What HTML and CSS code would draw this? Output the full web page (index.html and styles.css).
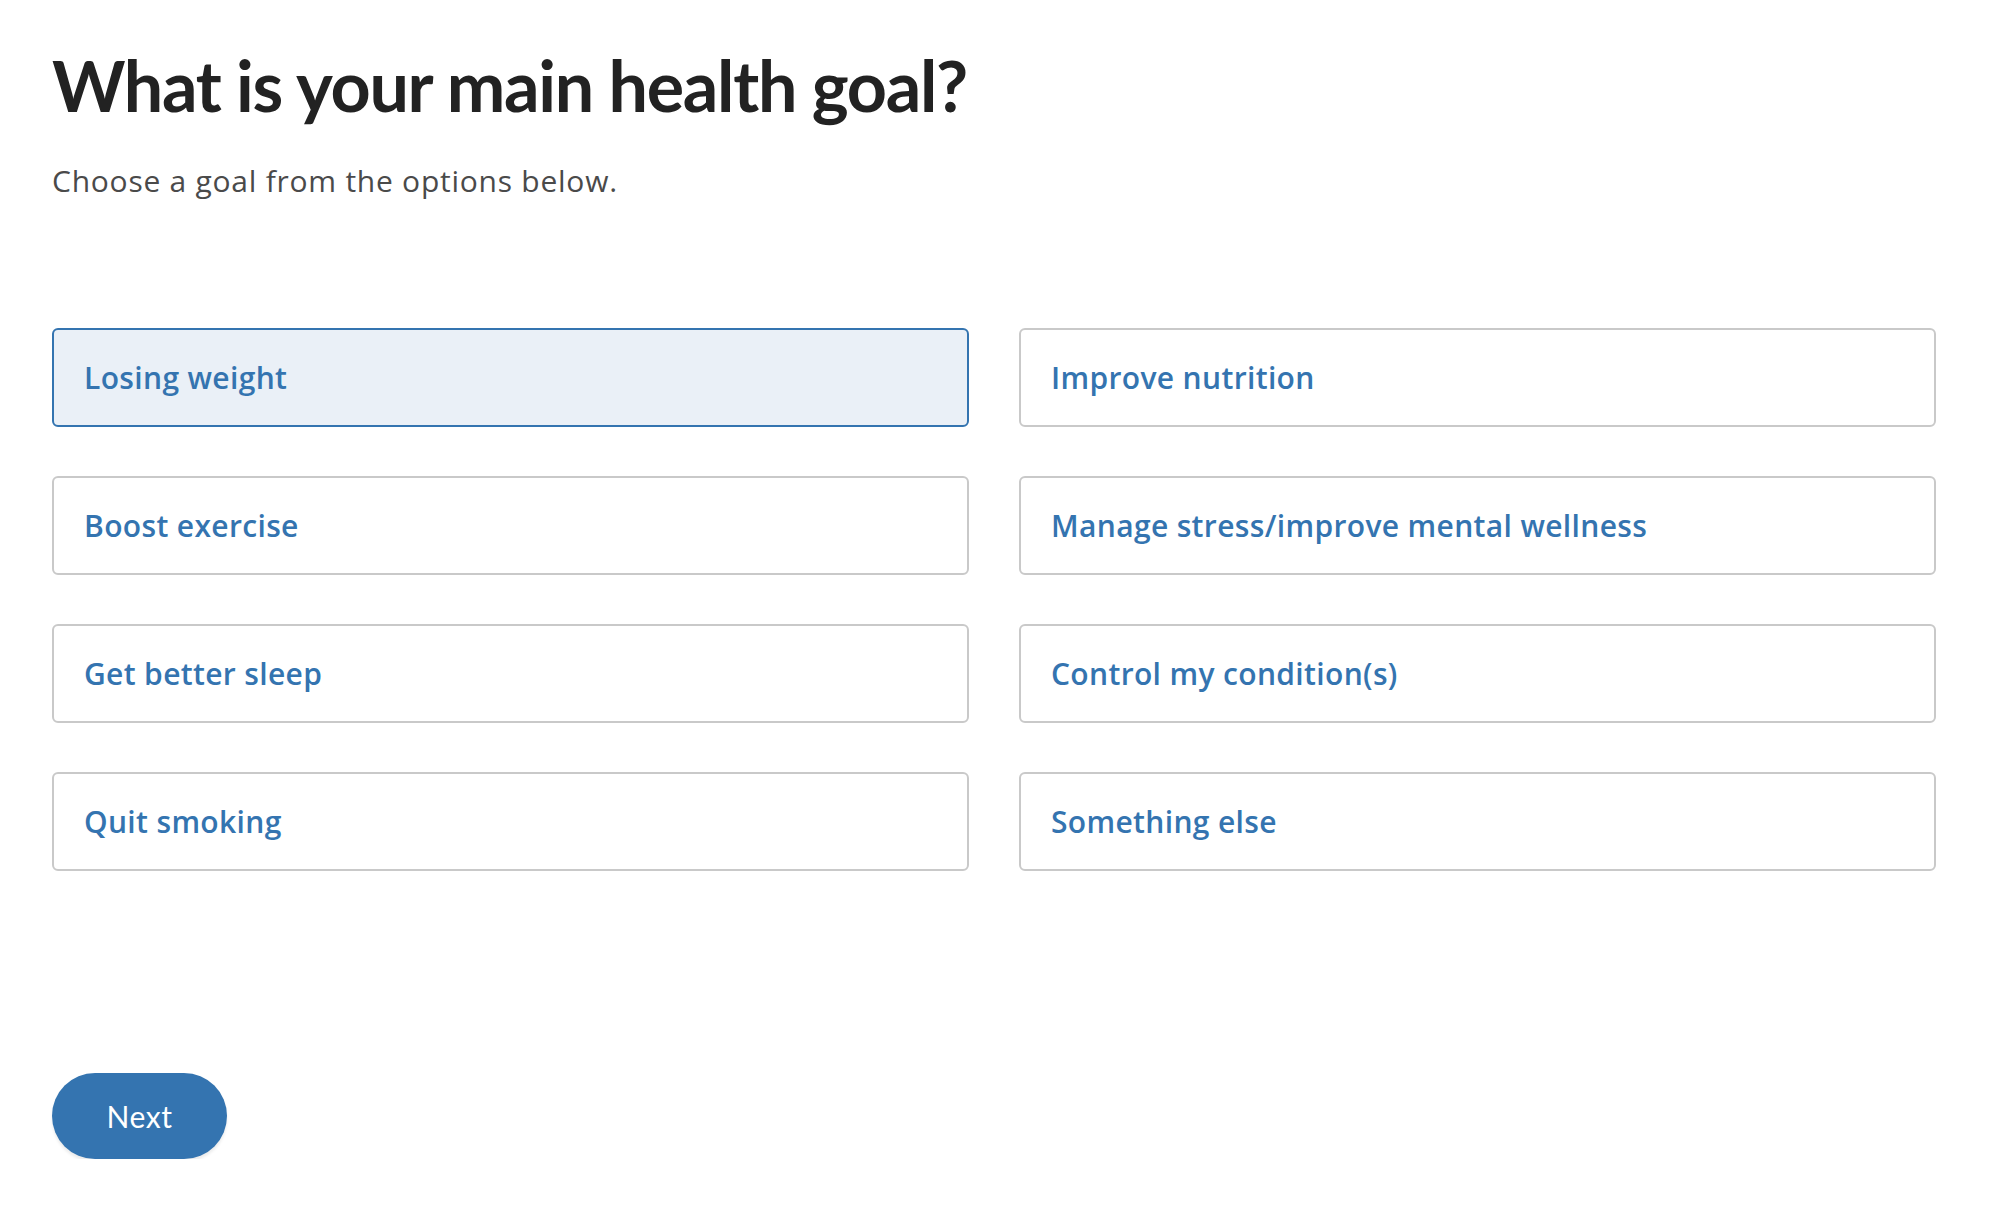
FILE: index.html
```html
<!DOCTYPE html>
<html lang="en">
<head>
    <meta charset="UTF-8">
    <meta name="viewport" content="width=device-width, initial-scale=1.0">
    <link rel="stylesheet" href="styles.css">
    <title>Health Goal</title>
</head>
<body>
    <main class="page">
        <h1 class="title">What is your main health goal?</h1>
        <p class="subtitle">Choose a goal from the options below.</p>

        <div class="options">
            <button class="option selected">Losing weight</button>
            <button class="option">Improve nutrition</button>
            <button class="option">Boost exercise</button>
            <button class="option">Manage stress/improve mental wellness</button>
            <button class="option">Get better sleep</button>
            <button class="option">Control my condition(s)</button>
            <button class="option">Quit smoking</button>
            <button class="option">Something else</button>
        </div>

        <button class="next">Next</button>
    </main>
</body>
</html>
```

FILE: styles.css
```css
/* Global */
body {
    margin: 0;
    padding: 0;
    background-color: #ffffff;
    font-family: Lato, "Open Sans", sans-serif;
    color: #222222;
}

.page {
    padding: 50px 58px 0 52px;
}

/* Heading */
.title {
    margin: 0;
    font-size: 70px;
    line-height: 1;
    font-weight: 700;
    letter-spacing: -1.3px;
    color: #222222;
}

.subtitle {
    margin: 46px 0 0;
    font-family: "Open Sans", Lato, sans-serif;
    font-size: 30px;
    line-height: 1;
    letter-spacing: 0.75px;
    color: #4a4a4a;
}

/* Options grid */
.options {
    display: grid;
    grid-template-columns: 1fr 1fr;
    gap: 49px 50px;
    margin-top: 132px;
}

.option {
    display: flex;
    align-items: center;
    height: 99px;
    padding: 0 30px;
    box-sizing: border-box;
    border: 2px solid #c9c9c9;
    border-radius: 6px;
    background-color: #ffffff;
    font-family: "Open Sans", Lato, sans-serif;
    font-size: 30px;
    font-weight: 600;
    letter-spacing: 0.35px;
    color: #3474b0;
    text-align: left;
    cursor: pointer;
}

.option.selected {
    border-color: #3474b0;
    background-color: #eaf0f7;
}

/* Next button */
.next {
    display: block;
    width: 175px;
    height: 86px;
    margin-top: 202px;
    border: none;
    border-radius: 43px;
    background-color: #3474b0;
    color: #ffffff;
    font-family: inherit;
    font-size: 30px;
    letter-spacing: 0.5px;
    box-shadow: 0 3px 3px rgba(0, 0, 0, 0.08);
    cursor: pointer;
}
```
